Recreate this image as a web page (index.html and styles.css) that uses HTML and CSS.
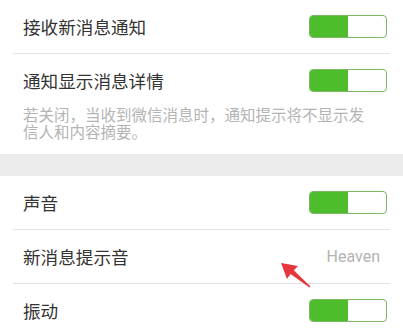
FILE: index.html
```html
<!DOCTYPE html>
<html lang="zh-CN">
<head>
    <meta charset="UTF-8">
    <meta name="viewport" content="width=device-width, initial-scale=1.0">
    <title>新消息通知</title>
    <link rel="stylesheet" href="styles.css">
</head>
<body>
    <div class="group">
        <div class="item">
            <span class="title">接收新消息通知</span>
            <span class="switch on"></span>
        </div>
        <div class="line"></div>
        <div class="item">
            <span class="title">通知显示消息详情</span>
            <span class="switch on"></span>
        </div>
        <p class="desc">若关闭，当收到微信消息时，通知提示将不显示发信人和内容摘要。</p>
    </div>

    <div class="gap"></div>

    <div class="group">
        <div class="item">
            <span class="title">声音</span>
            <span class="switch on"></span>
        </div>
        <div class="line"></div>
        <div class="item">
            <span class="title">新消息提示音</span>
            <span class="value">Heaven</span>
        </div>
        <div class="line"></div>
        <div class="item">
            <span class="title">振动</span>
            <span class="switch on"></span>
        </div>
    </div>

    <svg class="arrow" width="40" height="34" viewBox="0 0 40 34">
        <polygon points="5,5 22,8 17.8,12.2 34.5,28.5 33.5,29.5 14.5,16 11,21" fill="#e8373c"/>
    </svg>
</body>
</html>
```

FILE: styles.css
```css
body {
    margin: 0;
    background-color: white;
    font-family: "Noto Sans CJK SC", "Noto Sans", sans-serif;
    position: relative;
    overflow: hidden;
}
.group {
    background-color: white;
}
.item {
    display: flex;
    align-items: center;
    justify-content: space-between;
    height: 53px;
    padding: 0 16px 0 23px;
}
.title {
    font-size: 17.6px;
    color: #333;
}
.line {
    height: 1px;
    margin: 0 13px;
    background-color: #e3e3e3;
}
.desc {
    margin: -1px 0 0;
    padding: 0 30px 14px 23px;
    font-size: 15.5px;
    line-height: 17px;
    color: #b4b4b4;
}
.gap {
    height: 22px;
    background-color: #ebebeb;
}
.switch {
    width: 76px;
    height: 21px;
    border: 1px solid #7cb766;
    border-radius: 4px;
    background-color: white;
    display: flex;
    overflow: hidden;
}
.switch.on::before {
    content: "";
    width: 38px;
    background-color: #4dbd2b;
}
.value {
    margin-right: 7px;
    font-family: Roboto, "Liberation Sans", sans-serif;
    font-size: 16px;
    color: #b3b3b3;
}
.arrow {
    position: absolute;
    left: 276px;
    top: 258px;
}
```
